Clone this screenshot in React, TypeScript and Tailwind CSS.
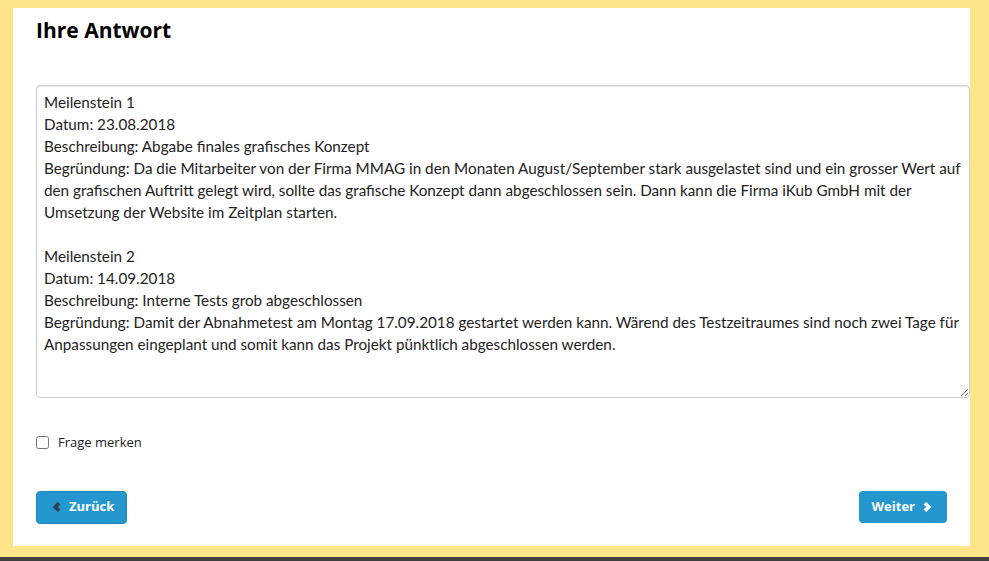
const answer = [
  "Meilenstein 1",
  "Datum: 23.08.2018",
  "Beschreibung: Abgabe finales grafisches Konzept",
  "Begründung: Da die Mitarbeiter von der Firma MMAG in den Monaten August/September stark ausgelastet sind und ein grosser Wert auf",
  "den grafischen Auftritt gelegt wird, sollte das grafische Konzept dann abgeschlossen sein. Dann kann die Firma iKub GmbH mit der",
  "Umsetzung der Website im Zeitplan starten.",
  "",
  "Meilenstein 2",
  "Datum: 14.09.2018",
  "Beschreibung: Interne Tests grob abgeschlossen",
  "Begründung: Damit der Abnahmetest am Montag 17.09.2018 gestartet werden kann. Wärend des Testzeitraumes sind noch zwei Tage für",
  "Anpassungen eingeplant und somit kann das Projekt pünktlich abgeschlossen werden.",
].join("\n");

const ChevronLeft = ({ className }: { className?: string }) => (
  <svg viewBox="0 0 10 12" className={className} fill="currentColor">
    <path d="M6.4 0.4 L9.4 3.2 L6.4 6 L9.4 8.8 L6.4 11.6 L0.8 6 Z" />
  </svg>
);

const ChevronRight = ({ className }: { className?: string }) => (
  <svg viewBox="0 0 10 12" className={className} fill="currentColor">
    <path d="M3.6 0.4 L0.6 3.2 L3.6 6 L0.6 8.8 L3.6 11.6 L9.2 6 Z" />
  </svg>
);

export default function App() {
  return (
    <div className="flex h-[561px] w-[989px] flex-col overflow-hidden bg-[#fee58a]">
      <div className="flex flex-1 pl-[13px] pr-[19px] pt-2 pb-[11px]">
        <main className="flex flex-1 flex-col bg-white pl-[23px] font-['Open_Sans',sans-serif] text-[#111]">
          <h1 className="mt-[7px] text-[21px] font-bold leading-[30px] text-black">Ihre Antwort</h1>

          <textarea
            readOnly
            wrap="off"
            defaultValue={answer}
            className="mt-[40px] h-[313px] w-full resize-y overflow-hidden whitespace-pre rounded-[4px] border border-[#cccccc] px-[7px] py-[5px] font-['Lato',sans-serif] text-[15.25px] leading-[22px] text-[#222] shadow-[inset_0_1px_1px_rgba(0,0,0,0.075)] outline-none"
          />

          <label className="mt-[35px] flex items-center gap-[9px] text-[13px] text-[#222]">
            <input type="checkbox" className="h-[13px] w-[13px]" />
            Frage merken
          </label>

          <div className="mt-[38px] mr-[23px] flex items-center justify-between">
            <button className="flex h-[33px] items-center gap-[8px] rounded-[4px] border border-[#1d86bd] bg-[#2597cf] pl-[15px] pr-[12px] text-[13px] font-bold text-white">
              <ChevronLeft className="h-[12px] w-[9px] text-[#2c3e50]" />
              Zurück
            </button>
            <button className="flex h-[32px] items-center gap-[8px] rounded-[4px] bg-[#2597cf] pl-[13px] pr-[15px] text-[13px] font-bold text-white">
              Weiter
              <ChevronRight className="h-[12px] w-[9px] text-white" />
            </button>
          </div>
        </main>
      </div>
      <div className="h-[4px] bg-[#3f3f3f]" />
    </div>
  );
}
